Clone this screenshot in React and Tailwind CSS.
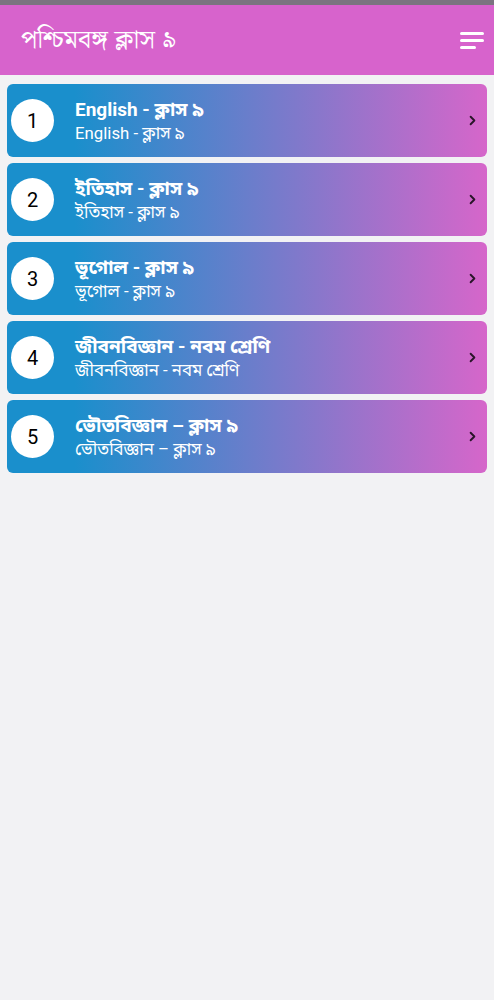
import { ChevronRight } from 'lucide-react'

const SUBJECTS = [
  { n: 1, title: 'English - ক্লাস ৯' },
  { n: 2, title: 'ইতিহাস - ক্লাস ৯' },
  { n: 3, title: 'ভূগোল - ক্লাস ৯' },
  { n: 4, title: 'জীবনবিজ্ঞান - নবম শ্রেণি' },
  { n: 5, title: 'ভৌতবিজ্ঞান –  ক্লাস ৯' },
]

function SubjectCard({ n, title }) {
  return (
    <div className="flex items-center h-[73px] rounded-[6px] bg-linear-to-r/srgb from-[#1a8fcc] from-[14%] to-[#d666ca] pl-[4px] pr-[7px]">
      <div className="w-[43px] h-[43px] rounded-full bg-white flex items-center justify-center shrink-0 text-[20px] text-black">
        {n}
      </div>
      <div className="flex-1 ml-[21px] text-white">
        <div className="text-[19px] leading-[24px] font-bold">{title}</div>
        <div className="text-[16.8px] leading-[22px]">{title}</div>
      </div>
      <ChevronRight size={15} strokeWidth={3} className="text-black/80" />
    </div>
  )
}

export default function App() {
  return (
    <div className="min-h-[1000px] bg-[#f2f2f4]" style={{ fontFamily: 'Roboto, "Noto Sans", "Noto Sans Bengali", sans-serif' }}>
      <div className="h-[5px] bg-[#7b7480]" />
      <div className="h-[70px] bg-[#d763cc] flex items-center justify-between pl-[21px] pr-[10px]">
        <h1 className="text-[26px] text-white" style={{ fontFamily: '"Noto Serif Bengali", "Noto Sans Bengali", serif' }}>
          পশ্চিমবঙ্গ ক্লাস ৯
        </h1>
        <div className="flex flex-col gap-[4px] w-[24px]">
          <span className="h-[3px] bg-white rounded-sm w-full" />
          <span className="h-[3px] bg-white rounded-sm w-full" />
          <span className="h-[3px] bg-white rounded-sm w-[16px]" />
        </div>
      </div>
      <div className="flex flex-col gap-[6px] px-[7px] pt-[9px]">
        {SUBJECTS.map((s) => (
          <SubjectCard key={s.n} {...s} />
        ))}
      </div>
    </div>
  )
}
